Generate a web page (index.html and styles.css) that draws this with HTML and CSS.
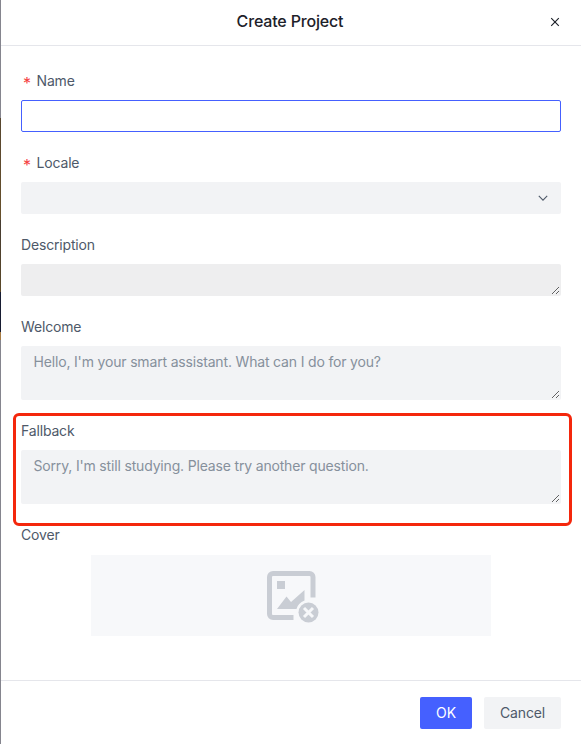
FILE: index.html
```html
<!DOCTYPE html>
<html lang="en">
<head>
<meta charset="utf-8">
<title>Create Project</title>
<link rel="stylesheet" href="styles.css">
</head>
<body>
<div class="modal" role="dialog">
  <header class="modal-header">
    <h1 class="modal-title">Create Project</h1>
    <button class="close" type="button" aria-label="Close">
      <svg width="10" height="10" viewBox="0 0 10 10" fill="none" stroke="#1d2129" stroke-width="1.15"><path d="M1.2 1.2l7.6 7.6M8.8 1.2L1.2 8.8"/></svg>
    </button>
  </header>
  <form class="modal-body">
    <div class="field">
      <label class="label required" for="name"><span class="star">*</span>Name</label>
      <input class="input" id="name" type="text">
    </div>
    <div class="field">
      <div class="label required"><span class="star">*</span>Locale</div>
      <div class="select">
        <svg width="12" height="12" viewBox="0 0 12 12" fill="none" stroke="#4e5969" stroke-width="1.1"><path d="M1.8 3.9L6 8.1l4.2-4.2"/></svg>
      </div>
    </div>
    <div class="field">
      <label class="label" for="description">Description</label>
      <textarea class="textarea single" id="description"></textarea>
    </div>
    <div class="field">
      <label class="label" for="welcome">Welcome</label>
      <textarea class="textarea" id="welcome" placeholder="Hello, I'm your smart assistant. What can I do for you?"></textarea>
    </div>
    <div class="field marked">
      <label class="label" for="fallback">Fallback</label>
      <textarea class="textarea" id="fallback" placeholder="Sorry, I'm still studying. Please try another question."></textarea>
    </div>
    <div class="field">
      <div class="label">Cover</div>
      <div class="cover">
        <svg width="54" height="54" viewBox="0 0 54 54" fill="none">
          <path d="M46 27.500V7a3.500 3.500 0 0 0-3.500-3.500H6A3.500 3.500 0 0 0 2.500 7v37A3.500 3.500 0 0 0 6 47.500h20.500" stroke="#c9cdd4" stroke-width="5"/>
          <path d="M10 11h8v8h-8zM10 39l9.500-12.500 4.500 5.500L37.500 20v10.500Q31 33 29.500 39z" fill="#c9cdd4"/>
          <circle cx="41.500" cy="42.500" r="10" fill="#c9cdd4"/>
          <path d="M37 38l9 9M46 38l-9 9" stroke="#f7f8fa" stroke-width="3"/>
        </svg>
      </div>
    </div>
  </form>
  <footer class="modal-footer">
    <button class="btn primary" type="button">OK</button>
    <button class="btn" type="button">Cancel</button>
  </footer>
</div>
</body>
</html>
```
FILE: styles.css
```css
* { box-sizing: border-box; }

body {
  margin: 0;
  height: 744px;
  padding-left: 1px;
  overflow: hidden;
  font: 14px/22px Inter, "Liberation Sans", sans-serif;
  letter-spacing: -0.17px;
  color: #4e5969;
  background: linear-gradient(#85858e 118px, #57462f 118px, #67502b 220px, #453b31 220px, #5b4828 292px, #171c32 292px, #171c32 332px, #a77b43 332px, #a77b43 340px, #85858e 340px);
}

.modal {
  display: flex;
  flex-direction: column;
  height: 744px;
  background: #fff;
}

.modal-header {
  display: grid;
  grid-template-columns: 20px 1fr 20px;
  align-items: center;
  height: 46px;
  padding: 0 16px 3px 14px;
  border-bottom: 1px solid #e5e6eb;
}

.modal-title {
  grid-column: 2;
  margin: 0;
  font-size: 16px;
  line-height: 24px;
  font-weight: 500;
  color: #1d2129;
  text-align: center;
}

.close {
  display: flex;
  align-items: center;
  justify-content: center;
  height: 20px;
  padding: 2px 0 0;
  border: 0;
  background: none;
}

.modal-body {
  flex: 1;
  padding: 24px 20px 0;
}

.field {
  position: relative;
  margin-bottom: 20px;
}

.label {
  display: block;
  height: 22px;
  margin-bottom: 8px;
}

.required {
  display: flex;
}

.star {
  width: 15.500px;
  padding: 2px 0 0 2px;
  font-size: 16px;
  color: #f53f3f;
}

.input {
  display: block;
  width: 100%;
  height: 32px;
  padding: 0 12px;
  border: 1px solid #4560ff;
  border-radius: 2px;
  outline: 0;
  font: inherit;
}

.select {
  display: flex;
  align-items: center;
  justify-content: flex-end;
  height: 32px;
  padding-right: 12px;
  border-radius: 2px;
  background: #f2f3f5;
}

.textarea {
  display: block;
  width: 100%;
  height: 54px;
  padding: 4px 11.500px;
  border: 1px solid transparent;
  border-radius: 2px;
  outline: 0;
  resize: vertical;
  overflow: hidden;
  font: inherit;
  letter-spacing: inherit;
  background: #f2f3f5;
}

.textarea::placeholder { color: #86909c; }

.textarea.single {
  height: 32px;
  background: #eeeeef;
}

.marked::after {
  content: "";
  position: absolute;
  inset: -7.500px -10.500px -21.500px -8px;
  border: 3px solid #f4270c;
  border-radius: 6px;
  pointer-events: none;
}

.cover {
  display: flex;
  align-items: center;
  justify-content: center;
  width: 400px;
  height: 81px;
  margin: 0 auto;
  padding: 2px 0 0 6px;
  background: #f7f8fa;
}

.modal .field:last-child .label { margin-bottom: 9px; }

.modal-footer {
  display: flex;
  justify-content: flex-end;
  gap: 12px;
  height: 64px;
  padding: 16px 20px 0;
  border-top: 1px solid #e5e6eb;
}

.btn {
  height: 32px;
  padding: 0;
  width: 77px;
  border: 0;
  border-radius: 2px;
  font: inherit;
  letter-spacing: inherit;
  color: #4e5969;
  background: #f2f3f5;
}

.btn.primary {
  width: 52px;
  color: #fff;
  background: #4560ff;
}
```
